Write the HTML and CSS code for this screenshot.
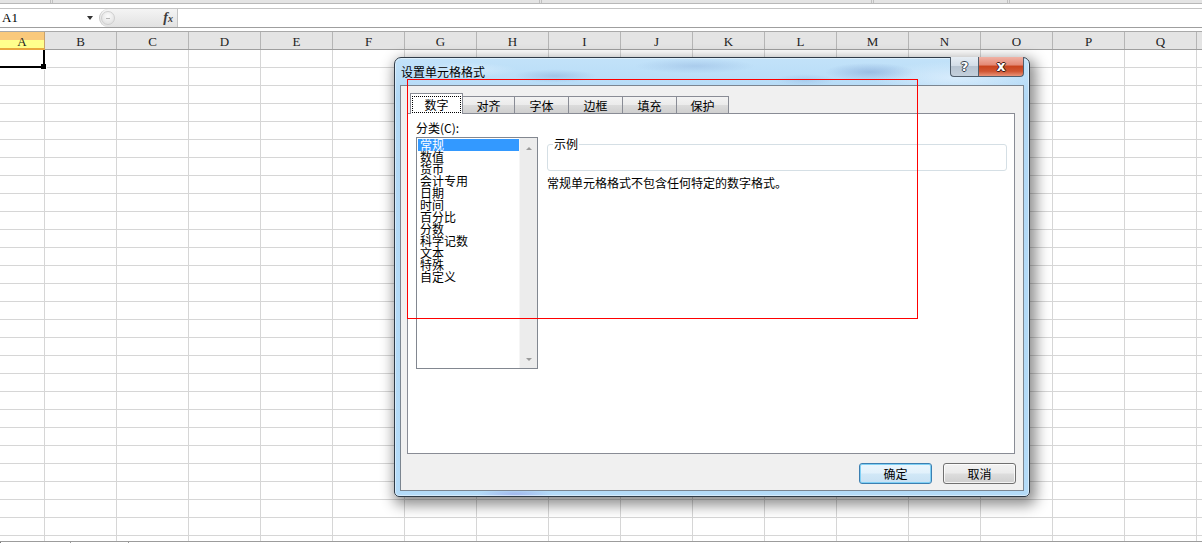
FILE: index.html
```html
<!DOCTYPE html>
<html lang="zh-CN">
<head>
<meta charset="utf-8">
<title>设置单元格格式</title>
<link rel="stylesheet" href="styles.css">
</head>
<body>
<div class="app">
  <div class="ribbon-edge">
    <div class="rseg rs1"></div>
    <div class="rseg rs2"></div>
    <div class="rseg rs3"></div>
    <div class="rseg rs4"></div>
  </div>

  <div class="formula-bar">
    <div class="namebox"><span class="nb-text">A1</span><span class="nb-arrow"></span></div>
    <div class="fx-pill">
      <span class="knob"><span class="knob-dash"></span></span>
      <span class="fx"><i>f</i><span class="fx-x">x</span></span>
    </div>
    <div class="formula-input"></div>
  </div>

  <div class="col-headers">
    <div class="ch ch-a">A</div>
    <div class="ch">B</div>
    <div class="ch">C</div>
    <div class="ch">D</div>
    <div class="ch">E</div>
    <div class="ch">F</div>
    <div class="ch">G</div>
    <div class="ch">H</div>
    <div class="ch">I</div>
    <div class="ch">J</div>
    <div class="ch">K</div>
    <div class="ch">L</div>
    <div class="ch">M</div>
    <div class="ch">N</div>
    <div class="ch">O</div>
    <div class="ch">P</div>
    <div class="ch">Q</div>
    <div class="ch"></div>
  </div>

  <div class="grid">
    <div class="sel-cell"><span class="fill-handle"></span></div>
  </div>

  <div class="sheet-tabs">
    <span class="st st1"></span><span class="st st2"></span><span class="st st3"></span>
  </div>

  <div class="dialog">
    <div class="titlebar">
      <span class="title">设置单元格格式</span>
      <div class="caption-btns">
        <span class="cb cb-help">?</span>
        <span class="cb cb-close">x</span>
      </div>
    </div>
    <div class="client">
      <div class="tabs">
        <div class="tab active w53"><span class="focus">数字</span></div>
        <div class="tab w52">对齐</div>
        <div class="tab w54">字体</div>
        <div class="tab w54">边框</div>
        <div class="tab w54">填充</div>
        <div class="tab w52">保护</div>
      </div>
      <div class="panel">
        <div class="cat-col">
          <div class="cat-label">分类(C):</div>
          <div class="listbox">
            <ul class="items">
              <li class="selected">常规</li>
              <li>数值</li>
              <li>货币</li>
              <li>会计专用</li>
              <li>日期</li>
              <li>时间</li>
              <li>百分比</li>
              <li>分数</li>
              <li>科学记数</li>
              <li>文本</li>
              <li>特殊</li>
              <li>自定义</li>
            </ul>
            <div class="vscroll">
              <span class="arr arr-up"></span>
              <span class="arr arr-down"></span>
            </div>
          </div>
        </div>
        <div class="detail-col">
          <div class="sample"><span class="legend">示例</span></div>
          <p class="desc">常规单元格格式不包含任何特定的数字格式。</p>
        </div>
      </div>
      <div class="buttons">
        <button class="btn btn-default">确定</button>
        <button class="btn">取消</button>
      </div>
    </div>
  </div>

  <div class="annotation"></div>
</div>
</body>
</html>
```

FILE: styles.css
```css
* { box-sizing: border-box; }
html, body { margin: 0; padding: 0; }
body {
  width: 1202px;
  height: 543px;
  overflow: hidden;
  background: #fff;
  font-family: "Noto Sans CJK SC", "Noto Sans", sans-serif;
  font-size: 12px;
  color: #000;
}
.app {
  position: relative;
  width: 1202px;
  height: 543px;
  display: flex;
  flex-direction: column;
  overflow: hidden;
}

/* ribbon bottom edge */
.ribbon-edge {
  flex: none;
  height: 4px;
  display: flex;
  background: #e4e4e4;
  border-bottom: 1px solid #b8b8b8;
}
.rseg { flex: none; height: 100%; border-right: 3px double #c0c0c0; }
.rs1 { width: 53px; }
.rs2 { width: 489px; }
.rs3 { width: 332px; }
.rs4 { width: 136px; }

/* formula bar */
.formula-bar {
  flex: none;
  margin-top: 4px;
  height: 20px;
  display: flex;
  border-top: 1px solid #c4c4c4;
  border-bottom: 1px solid #9f9f9f;
  font-family: "Liberation Serif", serif;
}
.namebox {
  flex: none;
  width: 97px;
  display: flex;
  align-items: center;
  justify-content: space-between;
  padding: 0 4px 0 2px;
}
.nb-text { font-size: 13px; color: #000; }
.nb-arrow {
  width: 0; height: 0;
  border-left: 3.5px solid transparent;
  border-right: 3.5px solid transparent;
  border-top: 4px solid #333;
}
.fx-pill {
  flex: none;
  width: 79px;
  margin-left: 2px;
  display: flex;
  align-items: center;
  justify-content: space-between;
  background: linear-gradient(#f4f4f4, #e2e2e2);
  border-radius: 9px 0 0 9px;
  border-left: 1px solid #c8c8c8;
  border-right: 1px solid #c4c4c4;
  padding: 0 4px 0 1px;
}
.knob {
  width: 14px; height: 14px;
  border-radius: 50%;
  border: 1px solid #cfcfcf;
  background: radial-gradient(circle at 50% 35%, #fbfbfb, #dcdcdc);
  display: flex; align-items: center; justify-content: center;
}
.knob-dash { width: 4px; height: 1px; background: #b5b5b5; }
.fx {
  font-family: "Liberation Serif", serif;
  font-weight: bold;
  color: #3c3c3c;
  font-size: 14px;
  line-height: 1;
}
.fx-x { font-size: 10px; font-style: italic; }
.formula-input { flex: 1; background: #fff; }

/* column headers */
.col-headers {
  flex: none;
  margin-top: 3px;
  height: 19px;
  display: flex;
  background: #e4e4e4;
  border-top: 1px solid #a9a9a9;
  border-bottom: 1px solid #9e9e9e;
  font-family: "Liberation Serif", serif;
  font-size: 13px;
  color: #1e1e1e;
}
.ch {
  flex: none;
  width: 72px;
  border-right: 1px solid #b5b5b5;
  text-align: center;
  line-height: 19px;
}
.ch-a {
  width: 45px;
  background: linear-gradient(#f9c97c 0, #f9c97c 50%, #ffff8c 50%, #ffff8c 100%);
  border-right-color: #c9a26b;
  margin-bottom: -1px;
  border-bottom: 2px solid #e9a83f;
}

/* grid */
.grid {
  flex: 1;
  position: relative;
  background-image:
    linear-gradient(to right, #d6d6d6 1px, transparent 1px),
    linear-gradient(to bottom, transparent 17px, #d6d6d6 17px);
  background-size: 72px 100%, 100% 18px;
  background-position: 44px 0, 0 0;
}
.sel-cell {
  position: absolute;
  left: 0;
  top: 0;
  width: 45px;
  height: 18px;
  border-right: 2px solid #000;
  border-bottom: 2px solid #000;
}
.fill-handle {
  position: absolute;
  right: -4px;
  bottom: -4px;
  width: 6px;
  height: 6px;
  background: #000;
  border: 1px solid #fff;
  border-top: none;
  border-left: none;
}
.sheet-tabs {
  flex: none;
  height: 2px;
  border-top: 1px solid #9c9c9c;
  display: flex;
}
.st { height: 1px; border-left: 1px solid #9c9c9c; }
.st1 { width: 70px; margin-left: 0; border-left: 1px solid #777; }
.st2 { width: 58px; }
.st3 { width: 58px; }

/* dialog */
.dialog {
  position: absolute;
  left: 394px;
  top: 57px;
  width: 636px;
  height: 440px;
  display: flex;
  flex-direction: column;
  padding: 0 5px 5px;
  border: 1px solid #2f3b47;
  border-radius: 7px 7px 5px 5px;
  background:
    radial-gradient(55px 9px at 160px 18px, rgba(140,176,218,.55), transparent 75%),
    radial-gradient(80px 10px at 300px 8px, rgba(150,184,224,.5), transparent 75%),
    radial-gradient(40px 8px at 410px 22px, rgba(150,184,224,.45), transparent 75%),
    radial-gradient(60px 12px at 475px 14px, rgba(128,162,210,.55), transparent 75%),
    radial-gradient(110px 22px at 560px 20px, rgba(235,245,255,.6), transparent 75%),
    radial-gradient(70px 10px at 70px 12px, rgba(235,245,255,.5), transparent 75%),
    radial-gradient(50px 6px at 120px 436px, rgba(150,160,230,.6), transparent 75%),
    linear-gradient(#c2e2f9, #b2d9f6 40px, #b4dbf8);
  box-shadow: 3px 5px 14px 3px rgba(0,0,0,.45), inset 0 0 0 1px rgba(255,255,255,.45);
}
.titlebar {
  flex: none;
  height: 27px;
  display: flex;
  justify-content: space-between;
  align-items: flex-start;
}
.title {
  padding-left: 1px;
  line-height: 27px;
  font-size: 12px;
  color: #000;
}
.caption-btns {
  display: flex;
  margin-top: -1px;
}
.cb {
  height: 20px;
  display: flex;
  align-items: center;
  justify-content: center;
  font-family: "DejaVu Sans", sans-serif;
  font-weight: bold;
  color: #fff;
  border: 1px solid #4f5d6b;
  border-top: none;
}
.cb-help {
  width: 28px;
  border-radius: 0 0 0 4px;
  border-right: none;
  font-size: 13px;
  background: linear-gradient(#e6edf4 0, #d3dde7 45%, #b7c4d1 50%, #c4d0dc 100%);
  text-shadow: 1px 0 0 #39424c, -1px 0 0 #39424c, 0 1px 0 #39424c, 0 -1px 0 #39424c;
}
.cb-close {
  width: 46px;
  border-radius: 0 0 4px 0;
  font-size: 14px;
  padding-bottom: 2px;
  background: linear-gradient(#f0b2a5 0, #e48a77 40%, #c9441f 50%, #d05633 75%, #e99479 100%);
  text-shadow: 1px 0 0 #3a1c15, -1px 0 0 #3a1c15, 0 1px 0 #3a1c15, 0 -1px 0 #3a1c15;
}

.client {
  flex: 1;
  display: flex;
  flex-direction: column;
  background: #f0f0f0;
  border: 1px solid #7b8590;
}
.tabs {
  flex: none;
  height: 27px;
  padding: 7px 0 0 9px;
  display: flex;
  align-items: flex-end;
}
.tab {
  flex: none;
  height: 17px;
  border: 1px solid #898c95;
  border-bottom: none;
  margin-left: -1px;
  text-align: center;
  line-height: 16px;
  padding-top: 1px;
  background: linear-gradient(#f3f3f3 0, #ebebeb 50%, #dcdcdc 50%, #cfcfcf 100%);
}
.w52 { width: 53px; }
.w53 { width: 53px; }
.w54 { width: 55px; }
.tab.active {
  height: 21px;
  margin-left: 0;
  margin-bottom: -1px;
  position: relative;
  z-index: 1;
  background: #fff;
  padding: 2px 1px 2px 1px;
}
.focus {
  display: block;
  height: 17px;
  border: 1px dotted #000;
  line-height: 15px;
}

.panel {
  flex: none;
  height: 341px;
  margin: 0 8px 0 6px;
  border: 1px solid #898c95;
  background: #fff;
  display: flex;
  padding: 8px 7px 0 8px;
}
.cat-col { flex: none; width: 122px; display: flex; flex-direction: column; }
.cat-label { line-height: 12px; height: 12px; margin-bottom: 3px; }
.listbox {
  height: 232px;
  display: flex;
  border: 1px solid #828790;
}
.items {
  list-style: none;
  margin: 0;
  padding: 1px 0 0 1px;
  width: 102px;
  flex: none;
}
.items li {
  height: 12px;
  line-height: 12px;
  padding-left: 2px;
  white-space: nowrap;
}
.items li.selected { background: #3399ff; color: #fff; }
.vscroll {
  flex: 1;
  background: #ececec;
  border-left: 1px solid #f6f6f6;
  display: flex;
  flex-direction: column;
  justify-content: space-between;
  align-items: center;
  padding: 9px 0 7px;
}
.arr { width: 0; height: 0; border-left: 3px solid transparent; border-right: 3px solid transparent; }
.arr-up { border-bottom: 3px solid #9a9a9a; }
.arr-down { border-top: 3px solid #9a9a9a; }

.detail-col { flex: 1; margin-left: 9px; display: flex; flex-direction: column; }
.sample {
  position: relative;
  margin-top: 22px;
  height: 27px;
  border: 1px solid #d5dfe5;
  border-radius: 3px;
}
.legend {
  position: absolute;
  left: 5px;
  top: -8px;
  background: #fff;
  padding: 0 1px;
  line-height: 13px;
}
.desc { margin: 6px 0 0; line-height: 12px; }

.buttons {
  flex: none;
  display: flex;
  justify-content: flex-end;
  gap: 11px;
  margin-top: 9px;
  padding-right: 7px;
}
.btn {
  width: 73px;
  height: 21px;
  padding: 0;
  border: 1px solid #707070;
  border-radius: 3px;
  background: linear-gradient(#f2f2f2 0, #ebebeb 48%, #dddddd 52%, #cfcfcf 100%);
  box-shadow: inset 0 0 0 1px rgba(255,255,255,.75);
  font-family: "Noto Sans CJK SC", sans-serif;
  font-size: 12px;
  line-height: 19px;
  color: #000;
}
.btn-default {
  border-color: #3c7fb1;
  box-shadow: inset 0 0 0 1px #7fd0f5;
  background: linear-gradient(#eaf6fd 0, #e2f1fb 48%, #d1e8f7 52%, #c8e1f3 100%);
}

.annotation {
  position: absolute;
  left: 407px;
  top: 79px;
  width: 511px;
  height: 240px;
  border: 1px solid #ff0000;
  pointer-events: none;
}
```
